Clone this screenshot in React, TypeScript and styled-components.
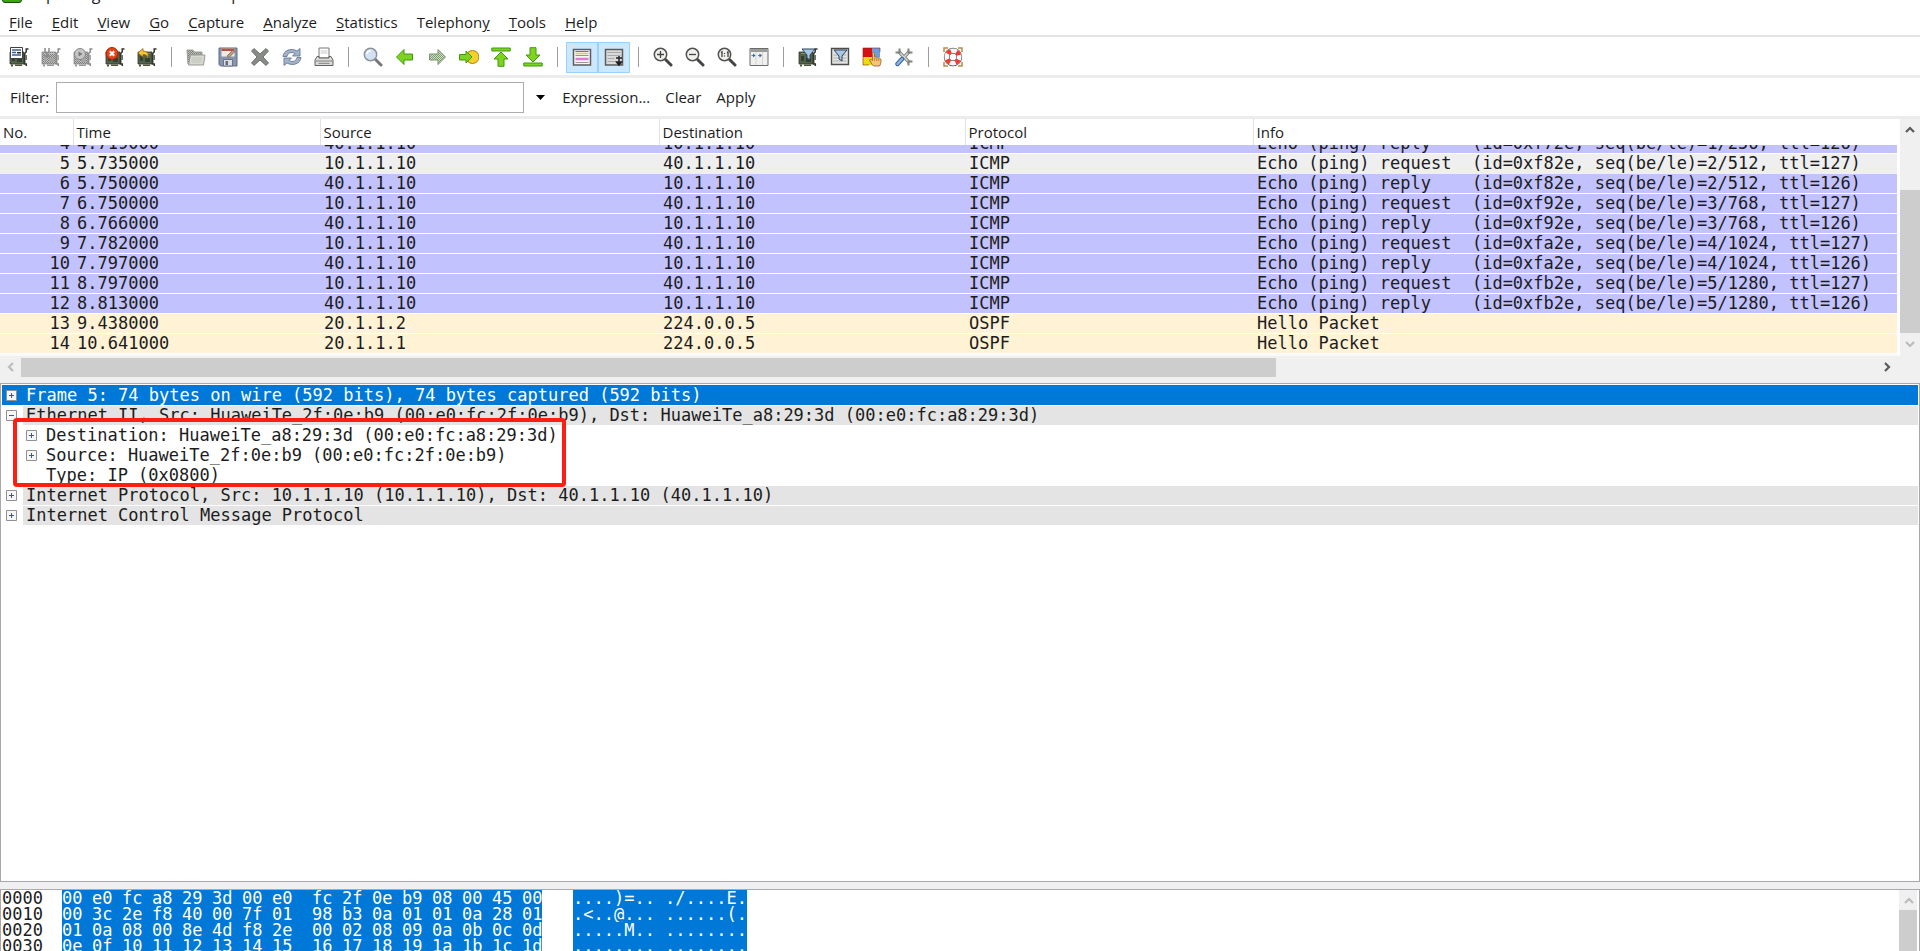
import React from "react";
import styled, { createGlobalStyle } from "styled-components";

const UI = `"Open Sans", "Noto Sans", sans-serif`;
const MONO = `"DejaVu Sans Mono", "Liberation Mono", monospace`;

const GlobalStyle = createGlobalStyle`
  * { box-sizing: border-box; }
  body {
    margin: 0;
    background: #fff;
    color: #1c1c1c;
    font: 15px/20px ${UI};
    overflow: hidden;
  }
  button { font: inherit; color: inherit; background: none; border: 0; padding: 0; }
  table { border-collapse: collapse; table-layout: fixed; width: 100%; }
`;

const Window = styled.div`
  display: flex;
  flex-direction: column;
  height: 100vh;
`;

const TitleBar = styled.header`
  display: flex;
  align-items: flex-end;
  flex: none;
  height: 4px;
  padding-left: 2px;
  gap: 5px;
  overflow: hidden;
  white-space: pre;
  font-size: 16px;
`;

const AppBadge = styled.span`
  width: 20px;
  height: 20px;
  margin-bottom: 1px;
  border: 1px solid #14500a;
  border-radius: 3px;
  background: #3fa417;
`;

const MenuBar = styled.nav`
  display: flex;
  flex: none;
  gap: 19px;
  height: 31px;
  padding: 5px 0 0 9px;
`;

const MenuButton = styled.button`
  height: 26px;
  u { text-underline-offset: 2px; }
`;

const Bar = styled.div<{ $height: number }>`
  display: flex;
  flex: none;
  align-items: center;
  height: ${(p) => p.$height}px;
  border-top: 2px solid #e4e4e4;
`;

const ToolBar = styled(Bar)`
  padding: 2px 0 0 3px;
`;

const ToolButton = styled.button<{ $on?: boolean }>`
  display: flex;
  align-items: center;
  justify-content: center;
  width: 32px;
  height: 31px;
  border: 1px solid ${(p) => (p.$on ? "#99d1ff" : "transparent")};
  background: ${(p) => (p.$on ? "#cce8ff" : "transparent")};
`;

const Separator = styled.span`
  width: 1px;
  height: 20px;
  margin: 0 8px;
  background: #9c9c9c;
`;

const FilterBar = styled(Bar)`
  padding-left: 10px;
  border-top: 3px solid #ececec;
`;

const FilterInput = styled.input`
  width: 468px;
  height: 31px;
  margin-left: 7px;
  padding: 0 6px;
  border: 1px solid #abadb3;
  outline: 0;
  font: 15px/20px ${UI};
`;

const DropButton = styled.button`
  display: flex;
  align-items: center;
  justify-content: center;
  width: 20px;
  height: 30px;
  margin: 0 12px 0 6px;
`;

const FilterAction = styled.button`
  margin-right: 15px;
`;

const ListPane = styled.section`
  display: flex;
  flex: none;
  border-top: 3px solid #ececec;
  background: #f0f0f0;
`;

const ListMain = styled.div`
  flex: 1;
  min-width: 0;
`;

const ListContent = styled.div`
  background: #fff;
  padding-right: 3px;
`;

const HeadCell = styled.th`
  height: 26px;
  padding: 0 0 0 3px;
  border-right: 1px solid #e2e2e2;
  text-align: left;
  font-weight: 400;
  &:last-child { border-right: 0; }
`;

const ListViewport = styled.div`
  display: flex;
  align-items: flex-end;
  height: 209px;
  overflow: hidden;
`;

const rowFill = { icmp: "#c2c2ff", selected: "#efefef", ospf: "#fff2d5" };
type Kind = keyof typeof rowFill;

const PacketRow = styled.tr<{ $kind: Kind }>`
  background: ${(p) => rowFill[p.$kind]};
  box-shadow: inset 0 -1px ${(p) => (p.$kind === "selected" ? rowFill.selected : "#fff")};
`;

const Cell = styled.td<{ $right?: boolean }>`
  height: 20px;
  padding: ${(p) => (p.$right ? "0 3px 0 0" : "0 0 0 4px")};
  text-align: ${(p) => (p.$right ? "right" : "left")};
  vertical-align: top;
  font: 17px/18px ${MONO};
  white-space: pre;
  overflow: hidden;
`;

const HScroll = styled.div`
  display: flex;
  align-items: center;
  height: 29px;
  padding: 0 3px 5px 1px;
  border-top: 2px solid #fafafa;
`;

const HTrack = styled.div`
  flex: 1;
  height: 19px;
`;

const HThumb = styled.div`
  width: 67.6%;
  height: 100%;
  background: #cdcdcd;
`;

const ScrollButton = styled.button`
  display: flex;
  align-items: center;
  justify-content: center;
  flex: none;
  width: 20px;
  height: 20px;
`;

const VScroll = styled.div<{ $wide?: boolean }>`
  display: flex;
  flex-direction: column;
  flex: none;
  width: ${(p) => (p.$wide ? 20 : 18)}px;
  background: #f0f0f0;
`;

const VTrack = styled.div<{ $top: number }>`
  flex: 1;
  padding-top: ${(p) => p.$top}px;
`;

const VThumb = styled.div`
  width: 100%;
  height: 100%;
  background: #cdcdcd;
`;

const ScrollEnd = styled.div`
  height: 50px;
  padding-top: 1px;
`;

const TreePane = styled.section`
  position: relative;
  flex: 1;
  min-height: 160px;
  padding: 1px;
  border: 1px solid #a8a8ae;
  font: 17px/20px ${MONO};
`;

const Tree = styled.ul`
  list-style: none;
  margin: 0;
  padding: 0;
`;

const TreeLine = styled.div<{ $selected?: boolean; $depth?: number }>`
  display: flex;
  align-items: center;
  height: 20px;
  padding-left: ${(p) => 4 + (p.$depth || 0) * 20}px;
  background: ${(p) => (p.$selected ? "#0078d7" : "transparent")};
  color: ${(p) => (p.$selected ? "#fff" : "#1c1c1c")};
`;

const TreeText = styled.span<{ $band?: boolean }>`
  flex: 1;
  height: 19px;
  margin-left: 6px;
  padding-left: 3px;
  line-height: 18px;
  white-space: pre;
  background: ${(p) => (p.$band ? "#e4e4e4" : "transparent")};
`;

const Expander = styled.button`
  display: flex;
  width: 11px;
  height: 11px;
`;

const Highlight = styled.div`
  position: absolute;
  left: 12px;
  top: 34px;
  width: 553px;
  height: 69px;
  border: 4px solid #ff1e12;
  border-radius: 4px;
`;

const Splitter = styled.div`
  flex: none;
  height: 7px;
  background: #f0f0f0;
`;

const HexPane = styled.section`
  display: flex;
  flex: none;
  height: 62px;
  overflow: hidden;
  border: 1px solid #a8a8ae;
  border-bottom: 0;
  padding: 0 2px 0 1px;
`;

const HexRows = styled.div`
  flex: 1;
  font: 17px/16px ${MONO};
`;

const HexRow = styled.div`
  display: flex;
  height: 16px;
`;

const Offset = styled.span`
  width: 60px;
`;

const Bytes = styled.span`
  display: flex;
  gap: 10px;
  width: 480px;
  margin-right: 31px;
  background: #0078d7;
  color: #fff;
`;

const ByteGroup = styled.span`
  display: grid;
  grid-template-columns: repeat(8, 30px);
`;

const Ascii = styled.span`
  background: #0078d7;
  color: #fff;
  white-space: pre;
`;

/* ---------- icons ---------- */

const Svg = ({ children }: { children: React.ReactNode }) => (
  <svg width="20" height="20" viewBox="0 0 20 20" fill="none" aria-hidden="true">
    {children}
  </svg>
);

const Card = ({ off }: { off?: boolean }) => {
  const board = off ? "url(#mesh)" : "#53634a";
  const dark = off ? "#8b8b8b" : "#30352e";
  return (
    <>
      <path d="M1 5h14v12H1z" fill={board} stroke={dark} strokeWidth=".8" />
      <path d="M3 9h3v5H3zM8 11h5v4H8z" fill={off ? "#a5a5a5" : "#353f30"} />
      <path d="M3 6.5h10" stroke={off ? "#bdbdbd" : "#7f9269"} />
      <path d="M19.5 2h-2.300v3l-1.500 1.500v10.500h1.600v2" stroke={dark} strokeWidth="1.500" />
      <path d="M16 8h2v5h-2z" fill={off ? "#aaa" : "#6c7768"} />
      <path d="M2 17.500h2v2H2zM6 17.500h7v1.500H6z" fill={off ? "#9a9a9a" : "#4a5533"} />
    </>
  );
};

const Funnel = ({ y = 0 }: { y?: number }) => (
  <path
    d={`M4 ${2 + y}h13l-5 6v5l-3-2v-3z`}
    fill="#a9c7e6"
    stroke="#2e435c"
    strokeWidth="1"
  />
);

const Lens = ({ blue }: { blue?: boolean }) => (
  <>
    <path d="M12.500 12.500l5.500 5.500" stroke={blue ? "#777" : "#444"} strokeWidth="3" strokeLinecap="round" />
    <circle cx="7.500" cy="7.500" r="6.200" fill={blue ? "#d3e2f2" : "#f0f0ec"} stroke={blue ? "#8c9299" : "#50524f"} strokeWidth="1.500" />
    {blue && <path d="M4 7a4 4 0 0 1 4-3.500" stroke="#fff" strokeWidth="1.500" />}
  </>
);

const green = { fill: "#7ed321", stroke: "#3f9a0c", strokeWidth: 1, strokeLinejoin: "round" as const };

const icons: Record<string, React.ReactNode> = {
  interfaces: (
    <>
      <Card />
      <path d="M1.500.5h12v11h-12z" fill="#fff" stroke="#3c4148" />
      <path d="M3 3h9M3 5.500h4M3 8h9" stroke="#3d5f92" strokeWidth="1.300" />
      <path d="M8 5h4v1.500H8z" fill="#222" />
    </>
  ),
  options: (
    <>
      <Card off />
      <path d="M4 1v3a2 2 0 0 0 2 2v5M8 1v3a2 2 0 0 1-2 2M3 9h6" stroke="#8a8a8a" strokeWidth="1.500" />
    </>
  ),
  start: (
    <>
      <Card off />
      <circle cx="7" cy="7" r="5.500" fill="#c6c6c6" stroke="#888" />
      <path d="M5.500 4.500l4 2.500-4 2.500z" fill="#777" />
    </>
  ),
  stop: (
    <>
      <Card />
      <circle cx="7" cy="6.500" r="6" fill="#e2441a" stroke="#a52405" />
      <path d="M4.800 4.300l4.400 4.400M9.200 4.300L4.800 8.700" stroke="#fff" strokeWidth="2" />
    </>
  ),
  restart: (
    <>
      <Card />
      <path d="M1 6l5-4.500v2.700c5-.3 6 3 4.500 7-.3-3-1.500-3.700-4.500-3.700V10z" fill="#f7c33b" stroke="#9a6a0a" strokeWidth=".8" />
    </>
  ),
  open: (
    <>
      <path d="M1 3h6l1.500 2H16v3H4v9H2z" fill="url(#mesh)" stroke="#999e95" />
      <path d="M4.500 8H19l-1.500 10H2.500z" fill="#d6dad1" stroke="#979c92" />
      <path d="M6 11h10M5.700 13h10M5.500 15h10" stroke="#c0c4bb" />
    </>
  ),
  save: (
    <>
      <path d="M1 1h18v18H2.500L1 17.500z" fill="#8795ad" stroke="#5f6d86" />
      <path d="M3.500 1.500h13v8h-13z" fill="#eeeae4" />
      <path d="M3.500 1.500h13v2.500h-13z" fill="#b45348" />
      <path d="M9 9l6-6 2 1.500-6 6z" fill="#c29a77" stroke="#806048" strokeWidth=".7" />
      <path d="M5.500 12.500h9V19h-9z" fill="#dcdedf" stroke="#697586" />
      <path d="M7.500 14h2.500v4H7.500z" fill="#5d6a80" />
    </>
  ),
  close: (
    <path d="M4 1.500l6 5.500 6-5.500L18.500 4l-5.500 6 5.500 6-2.500 2.500-6-5.500-6 5.500L1.500 16 7 10 1.500 4z" fill="#888b86" stroke="#666964" strokeWidth=".9" strokeLinejoin="round" />
  ),
  reload: (
    <>
      <path d="M1 9.500C1.500 3.500 9 .5 15 4l3-2.500v7.500h-7.500l2.500-2.500C9 4.500 6 5.500 5 9.500z" fill="#a3b3c8" stroke="#66799a" strokeWidth=".9" />
      <path d="M19 10.500c-.5 6-8 9-14 5.500l-3 2.500V11h7.500L7 13.500c4 2 7 1 8-3z" fill="#a3b3c8" stroke="#66799a" strokeWidth=".9" />
    </>
  ),
  print: (
    <>
      <path d="M5 1h10v10H5z" fill="#fff" stroke="#777" />
      <path d="M6.500 4h7M6.500 6h7" stroke="#c8c8c8" />
      <path d="M3 9.500h2V11h10V9.500h2l2 3.500v5.500H1V13z" fill="#dcdcd9" stroke="#606060" />
      <path d="M1.500 14h17M4.500 16.300h11" stroke="#808080" />
    </>
  ),
  find: <Lens blue />,
  back: <path d="M1.500 10l7.500-7.500v4.500h8.500v6H9v4.500z" {...green} />,
  forward: <path d="M18.500 10L11 2.500v4.500H2.500v6H11v4.500z" fill="url(#greenmesh)" stroke="#7c9570" />,
  goto: (
    <>
      <circle cx="13.500" cy="10" r="6.500" fill="#f5cf2a" stroke="#a88408" />
      <path d="M13 10L7 4v3.500H.5v5.500H7V16z" {...green} />
    </>
  ),
  first: (
    <>
      <path d="M.8 1h18.400v3H.8z" {...green} />
      <path d="M10 5l7 7h-4v7.300H7V12H3z" {...green} />
    </>
  ),
  last: (
    <>
      <path d="M.8 16h18.400v3H.8z" {...green} />
      <path d="M10 15l7-7h-4V.7H7V8H3z" {...green} />
    </>
  ),
  colorize: (
    <>
      <path d="M1.500 2.500h17v15.500h-17z" fill="#f7f7f7" stroke="#5b5d5a" strokeWidth="1.500" />
      <path d="M3.500 4.500h13" stroke="#777" />
      <path d="M3.500 6.500h13" stroke="#e7c65b" strokeWidth="1.500" />
      <path d="M3.500 8.500h13" stroke="#5aa4d8" />
      <path d="M3.500 12h13" stroke="#df7ad6" strokeWidth="2.500" />
      <path d="M3.500 15.500h13" stroke="#999" />
    </>
  ),
  autoscroll: (
    <>
      <path d="M1.500 2.500h17v15.500h-17z" fill="#dadada" stroke="#5b5d5a" strokeWidth="1.500" />
      <path d="M3.500 5.500h13M3.500 8.500h13M3.500 11.500h7M3.500 14.500h7" stroke="#a8a8a8" />
      <path d="M12 11h6M15 9v8M12.500 15l2.500 3 2.500-3z" stroke="#222" strokeWidth="1.500" fill="#222" />
    </>
  ),
  zoomIn: (
    <>
      <Lens />
      <path d="M4 7.500h7M7.500 4v7" stroke="#444" strokeWidth="1.300" />
    </>
  ),
  zoomOut: (
    <>
      <Lens />
      <path d="M4 7.500h7" stroke="#444" strokeWidth="1.300" />
    </>
  ),
  zoomOne: (
    <>
      <Lens />
      <path d="M4 5.500l1-.7V10M10 5.500l1-.7V10M7.500 6v1M7.500 8.500v1" stroke="#333" strokeWidth="1.200" />
    </>
  ),
  resize: (
    <>
      <path d="M1 1.500h18v17H1z" fill="#f0f0ee" stroke="#6a6c69" />
      <path d="M1.500 2h17v3h-17z" fill="#9a9c99" />
      <path d="M7 5v13M13.500 5v13" stroke="#d4d4d2" />
      <path d="M2.500 8.500h3M9 8.500h3" stroke="#5a87bb" strokeWidth="1.200" />
      <path d="M4 6.500v4l2.500-2zM10.500 6.500v4l2.500-2z" fill="#3465a4" />
    </>
  ),
  captureFilter: (
    <>
      <Card />
      <Funnel />
    </>
  ),
  displayFilter: (
    <>
      <path d="M1.500 1.500h17v16h-17z" fill="#e3e3e1" stroke="#4c4e4b" strokeWidth="1.400" />
      <path d="M3.500 8h13M3.500 11h13M3.500 14h13" stroke="#b0b0ae" />
      <Funnel y={1} />
    </>
  ),
  rules: (
    <>
      <path d="M1 1h9v9H1z" fill="#d80f0f" />
      <path d="M10 1h8v9h-8z" fill="#6e9ddb" />
      <path d="M1 10h9v8H1z" fill="#f3d712" />
      <path d="M10 17.500L7.500 13c1-1 2-.5 3 .5V6.500c0-1.500 2-1.500 2 0V10c3 0 6.500 1 6.500 3s-.5 5-1.500 6H12z" fill="#f2c47f" stroke="#a4671d" strokeWidth=".9" />
      <path d="M12.700 11v3M14.800 11v3M16.800 11.500v2.500" stroke="#a4671d" strokeWidth=".7" />
      <path d="M1 1h17v4M1 1v17h6" stroke="#7c2a20" strokeWidth=".6" />
    </>
  ),
  prefs: (
    <>
      <path d="M5 5l10.500 10.500M15 5l-6 6" stroke="#80837f" strokeWidth="3.400" />
      <path d="M5 5l10.500 10.500M15 5l-6 6" stroke="#d3d5d1" strokeWidth="1.600" />
      <path d="M5.500 1.500v4h-4M14.500 18.500v-4h4M14.500 1.500v4h4" stroke="#80837f" strokeWidth="2" />
      <path d="M8 12l-4.500 5" stroke="#3465a4" strokeWidth="4.400" strokeLinecap="round" />
      <path d="M8 12l-4.500 5" stroke="#8fb4e0" strokeWidth="2.400" strokeLinecap="round" />
    </>
  ),
  help: (
    <>
      <path d="M1 5V1h4M15 1h4v4M1 15v4h4M19 15v4h-4" stroke="#b98a45" strokeWidth="1.500" />
      <circle cx="10" cy="10" r="6.200" stroke="#5d5d5d" strokeWidth="6" />
      <circle cx="10" cy="10" r="6.200" stroke="#f7f7f7" strokeWidth="4.600" />
      <circle cx="10" cy="10" r="6.200" stroke="#f33a32" strokeWidth="4.600" strokeDasharray="3.900 5.840" strokeDashoffset="-2.920" />
    </>
  ),
};

const toolGroups: { icon: string; label: string; on?: boolean }[][] = [
  [
    { icon: "interfaces", label: "List interfaces" },
    { icon: "options", label: "Capture options" },
    { icon: "start", label: "Start capture" },
    { icon: "stop", label: "Stop capture" },
    { icon: "restart", label: "Restart capture" },
  ],
  [
    { icon: "open", label: "Open" },
    { icon: "save", label: "Save" },
    { icon: "close", label: "Close" },
    { icon: "reload", label: "Reload" },
    { icon: "print", label: "Print" },
  ],
  [
    { icon: "find", label: "Find packet" },
    { icon: "back", label: "Go back" },
    { icon: "forward", label: "Go forward" },
    { icon: "goto", label: "Go to packet" },
    { icon: "first", label: "First packet" },
    { icon: "last", label: "Last packet" },
  ],
  [
    { icon: "colorize", label: "Colorize", on: true },
    { icon: "autoscroll", label: "Auto scroll", on: true },
  ],
  [
    { icon: "zoomIn", label: "Zoom in" },
    { icon: "zoomOut", label: "Zoom out" },
    { icon: "zoomOne", label: "Normal size" },
    { icon: "resize", label: "Resize columns" },
  ],
  [
    { icon: "captureFilter", label: "Capture filters" },
    { icon: "displayFilter", label: "Display filters" },
    { icon: "rules", label: "Coloring rules" },
    { icon: "prefs", label: "Preferences" },
  ],
  [{ icon: "help", label: "Help" }],
];

/* Menu captions as [before, mnemonic, after] */
const menus = [
  ["", "F", "ile"],
  ["", "E", "dit"],
  ["", "V", "iew"],
  ["", "G", "o"],
  ["", "C", "apture"],
  ["", "A", "nalyze"],
  ["", "S", "tatistics"],
  ["Telephon", "y", ""],
  ["", "T", "ools"],
  ["", "H", "elp"],
];

const columns = [73, 247, 339, 306, 288, 0];
const headings = ["No.", "Time", "Source", "Destination", "Protocol", "Info"];

const A = "10.1.1.10";
const B = "40.1.1.10";
const packets: { kind: Kind; cells: string[] }[] = [
  { kind: "icmp", cells: ["4", "4.719000", B, A, "ICMP", "Echo (ping) reply    (id=0xf72e, seq(be/le)=1/256, ttl=126)"] },
  { kind: "selected", cells: ["5", "5.735000", A, B, "ICMP", "Echo (ping) request  (id=0xf82e, seq(be/le)=2/512, ttl=127)"] },
  { kind: "icmp", cells: ["6", "5.750000", B, A, "ICMP", "Echo (ping) reply    (id=0xf82e, seq(be/le)=2/512, ttl=126)"] },
  { kind: "icmp", cells: ["7", "6.750000", A, B, "ICMP", "Echo (ping) request  (id=0xf92e, seq(be/le)=3/768, ttl=127)"] },
  { kind: "icmp", cells: ["8", "6.766000", B, A, "ICMP", "Echo (ping) reply    (id=0xf92e, seq(be/le)=3/768, ttl=126)"] },
  { kind: "icmp", cells: ["9", "7.782000", A, B, "ICMP", "Echo (ping) request  (id=0xfa2e, seq(be/le)=4/1024, ttl=127)"] },
  { kind: "icmp", cells: ["10", "7.797000", B, A, "ICMP", "Echo (ping) reply    (id=0xfa2e, seq(be/le)=4/1024, ttl=126)"] },
  { kind: "icmp", cells: ["11", "8.797000", A, B, "ICMP", "Echo (ping) request  (id=0xfb2e, seq(be/le)=5/1280, ttl=127)"] },
  { kind: "icmp", cells: ["12", "8.813000", B, A, "ICMP", "Echo (ping) reply    (id=0xfb2e, seq(be/le)=5/1280, ttl=126)"] },
  { kind: "ospf", cells: ["13", "9.438000", "20.1.1.2", "224.0.0.5", "OSPF", "Hello Packet"] },
  { kind: "ospf", cells: ["14", "10.641000", "20.1.1.1", "224.0.0.5", "OSPF", "Hello Packet"] },
];

const hexDump = [
  ["0000", "00 e0 fc a8 29 3d 00 e0", "fc 2f 0e b9 08 00 45 00", "....)=.. ./....E."],
  ["0010", "00 3c 2e f8 40 00 7f 01", "98 b3 0a 01 01 0a 28 01", ".<..@... ......(."],
  ["0020", "01 0a 08 00 8e 4d f8 2e", "00 02 08 09 0a 0b 0c 0d", ".....M.. ........"],
  ["0030", "0e 0f 10 11 12 13 14 15", "16 17 18 19 1a 1b 1c 1d", "........ ........"],
];

const Columns = () => (
  <colgroup>
    {columns.map((w, i) => (
      <col key={i} style={w ? { width: w } : undefined} />
    ))}
  </colgroup>
);

const chevrons = {
  up: "M2 9l4-4 4 4",
  down: "M2 4l4 4 4-4",
  left: "M8 2L4 6l4 4",
  right: "M4 2l4 4-4 4",
};

const Chevron = ({ dir, dim }: { dir: keyof typeof chevrons; dim?: boolean }) => (
  <ScrollButton aria-label={`Scroll ${dir}`}>
    <svg width="12" height="12" viewBox="0 0 12 12" fill="none">
      <path d={chevrons[dir]} stroke={dim ? "#bcbcbc" : "#5a5a5a"} strokeWidth="2.200" />
    </svg>
  </ScrollButton>
);

type NodeProps = {
  text: string;
  depth?: number;
  selected?: boolean;
  open?: boolean;
  leaf?: boolean;
  children?: React.ReactNode;
};

const TreeNode = ({ text, depth, selected, open, leaf, children }: NodeProps) => (
  <li>
    <TreeLine $selected={selected} $depth={depth}>
      {leaf ? (
        <svg width="11" height="11" />
      ) : (
        <Expander aria-label={open ? "Collapse" : "Expand"}>
          <svg width="11" height="11" viewBox="0 0 11 11">
            <path d="M.5.5h10v10H.5z" fill="#f6f6f6" stroke="#919191" />
            <path d={open ? "M3 5.500h5" : "M3 5.500h5M5.500 3v5"} stroke="#3b56a4" />
          </svg>
        </Expander>
      )}
      <TreeText $band={!depth && !selected}>{text}</TreeText>
    </TreeLine>
    {children && <Tree>{children}</Tree>}
  </li>
);

const Patterns = () => (
  <defs>
    <pattern id="mesh" width="2" height="2" patternUnits="userSpaceOnUse">
      <path d="M0 0h2v2H0z" fill="#c2c3c0" />
      <path d="M0 0h1v1H0zM1 1h1v1H1z" fill="#7c7d7a" />
    </pattern>
    <pattern id="greenmesh" width="2" height="2" patternUnits="userSpaceOnUse">
      <path d="M0 0h2v2H0z" fill="#cfddc5" />
      <path d="M0 0h1v1H0zM1 1h1v1H1z" fill="#7f9d70" />
    </pattern>
  </defs>
);

export default function App() {
  return (
    <Window>
      <GlobalStyle />
      <TitleBar>
        <AppBadge />
        <span>Capturing from Standard input - Wireshark</span>
      </TitleBar>

      <MenuBar>
        {menus.map(([pre, key, post]) => (
          <MenuButton key={pre + key + post}>
            {pre}
            <u>{key}</u>
            {post}
          </MenuButton>
        ))}
      </MenuBar>

      <ToolBar $height={40} role="toolbar">
        {toolGroups.map((group, g) => (
          <React.Fragment key={g}>
            {g > 0 && <Separator />}
            {group.map((t) => (
              <ToolButton key={t.icon} $on={t.on} aria-label={t.label}>
                <Svg>
                  <Patterns />
                  {icons[t.icon]}
                </Svg>
              </ToolButton>
            ))}
          </React.Fragment>
        ))}
      </ToolBar>

      <FilterBar $height={41}>
        <label htmlFor="filter">Filter:</label>
        <FilterInput id="filter" type="text" />
        <DropButton aria-label="Filter history">
          <svg width="9" height="5" viewBox="0 0 9 5">
            <path d="M0 0h9L4.500 5z" fill="#000" />
          </svg>
        </DropButton>
        <FilterAction>Expression...</FilterAction>
        <FilterAction>Clear</FilterAction>
        <FilterAction>Apply</FilterAction>
      </FilterBar>

      <ListPane>
        <ListMain>
          <ListContent>
            <table>
              <Columns />
              <thead>
                <tr>
                  {headings.map((h) => (
                    <HeadCell key={h}>{h}</HeadCell>
                  ))}
                </tr>
              </thead>
            </table>
            <ListViewport>
              <table aria-label="Packets">
                <Columns />
                <tbody>
                  {packets.map((p) => (
                    <PacketRow key={p.cells[0]} $kind={p.kind}>
                      {p.cells.map((c, i) => (
                        <Cell key={i} $right={i === 0}>
                          {c}
                        </Cell>
                      ))}
                    </PacketRow>
                  ))}
                </tbody>
              </table>
            </ListViewport>
          </ListContent>
          <HScroll>
            <Chevron dir="left" dim />
            <HTrack>
              <HThumb />
            </HTrack>
            <Chevron dir="right" />
          </HScroll>
        </ListMain>
        <VScroll $wide>
          <Chevron dir="up" />
          <VTrack $top={51}>
            <VThumb />
          </VTrack>
          <ScrollEnd>
            <Chevron dir="down" dim />
          </ScrollEnd>
        </VScroll>
      </ListPane>

      <TreePane>
        <Tree>
          <TreeNode selected text="Frame 5: 74 bytes on wire (592 bits), 74 bytes captured (592 bits)" />
          <TreeNode open text="Ethernet II, Src: HuaweiTe_2f:0e:b9 (00:e0:fc:2f:0e:b9), Dst: HuaweiTe_a8:29:3d (00:e0:fc:a8:29:3d)">
            <TreeNode depth={1} text="Destination: HuaweiTe_a8:29:3d (00:e0:fc:a8:29:3d)" />
            <TreeNode depth={1} text="Source: HuaweiTe_2f:0e:b9 (00:e0:fc:2f:0e:b9)" />
            <TreeNode depth={1} leaf text="Type: IP (0x0800)" />
          </TreeNode>
          <TreeNode text="Internet Protocol, Src: 10.1.1.10 (10.1.1.10), Dst: 40.1.1.10 (40.1.1.10)" />
          <TreeNode text="Internet Control Message Protocol" />
        </Tree>
        <Highlight />
      </TreePane>

      <Splitter />

      <HexPane>
        <HexRows>
          {hexDump.map(([offset, left, right, ascii]) => (
            <HexRow key={offset}>
              <Offset>{offset}</Offset>
              <Bytes>
                {[left, right].map((half, g) => (
                  <ByteGroup key={g}>
                    {half.split(" ").map((b, i) => (
                      <span key={i}>{b}</span>
                    ))}
                  </ByteGroup>
                ))}
              </Bytes>
              <Ascii>{ascii}</Ascii>
            </HexRow>
          ))}
        </HexRows>
        <VScroll>
          <Chevron dir="up" dim />
          <VTrack $top={0}>
            <VThumb />
          </VTrack>
        </VScroll>
      </HexPane>
    </Window>
  );
}
